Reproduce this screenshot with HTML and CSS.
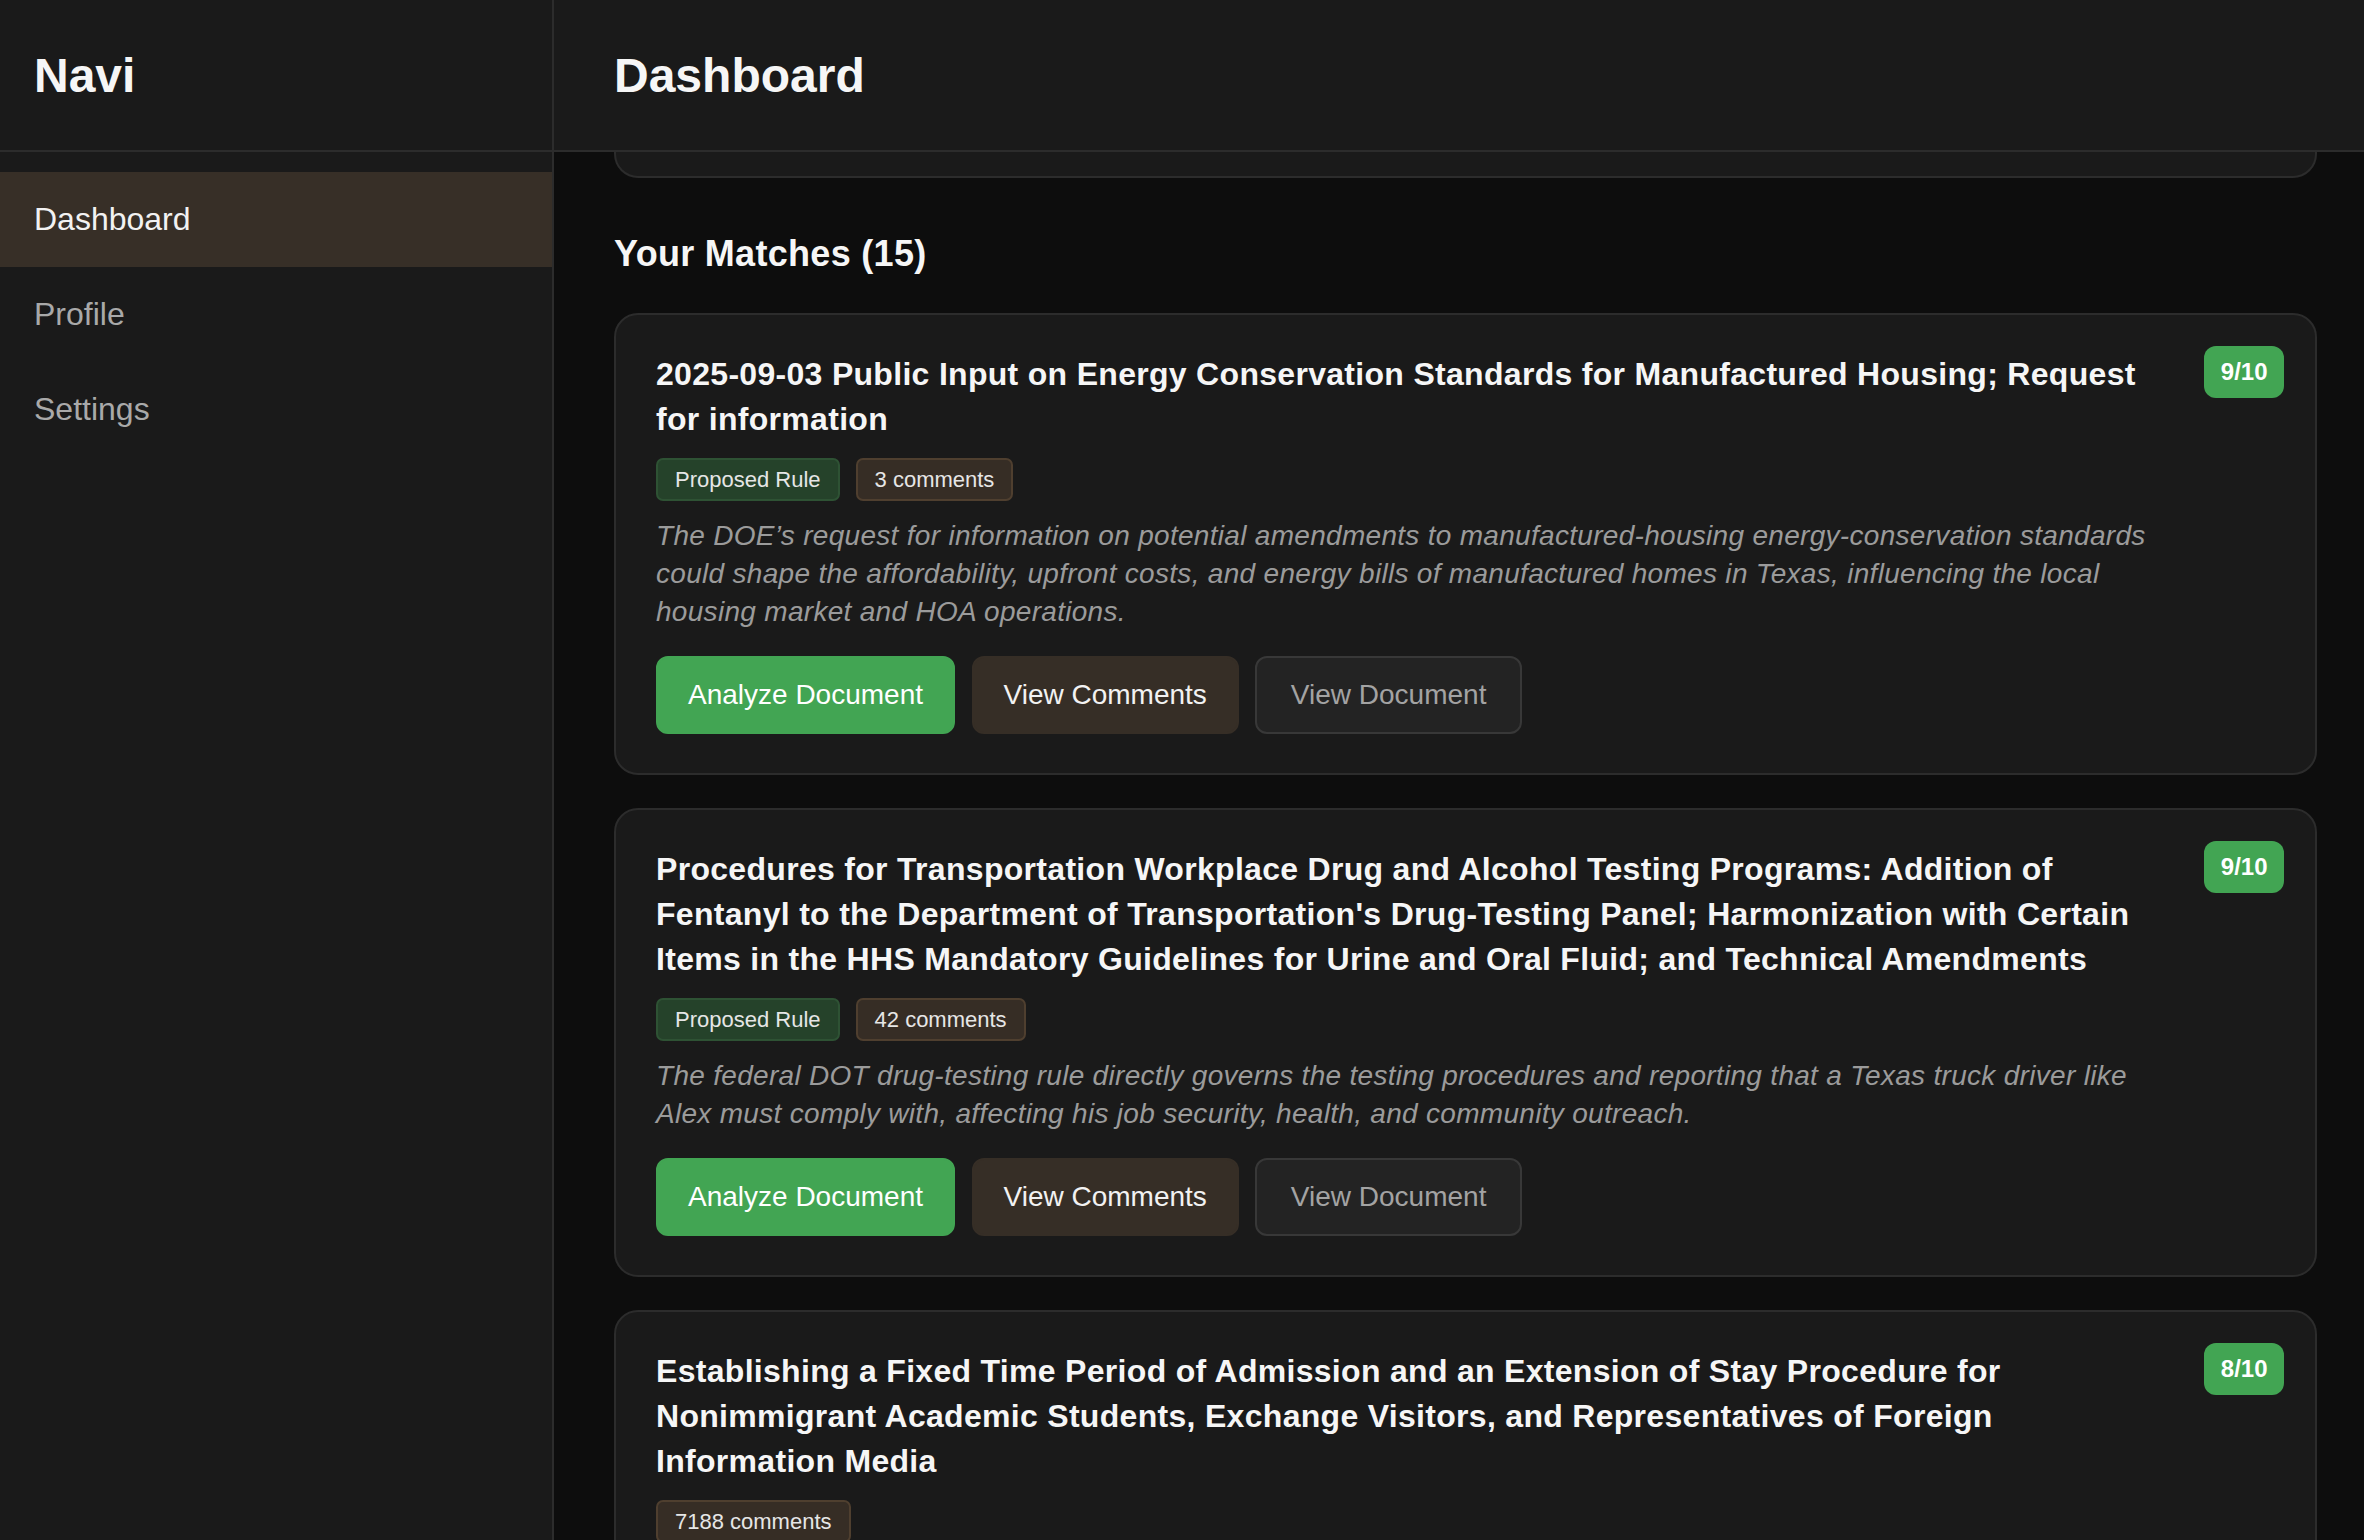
FILE: index.html
```html
<!DOCTYPE html>
<html lang="en">
<head>
<meta charset="utf-8">
<title>Navi – Dashboard</title>
<link rel="stylesheet" href="styles.css">
</head>
<body>
  <aside class="sidebar">
    <div class="brand">Navi</div>
    <nav class="nav">
      <a class="nav-item is-active">Dashboard</a>
      <a class="nav-item">Profile</a>
      <a class="nav-item">Settings</a>
    </nav>
  </aside>
  <main class="main">
    <header class="topbar"><h1 class="page-title">Dashboard</h1></header>
    <section class="content">
      <div class="card card-tail"></div>
      <h2 class="section-title">Your Matches (15)</h2>

      <article class="card">
        <div class="card-body">
          <h3 class="card-title">2025-09-03 Public Input on Energy Conservation Standards for Manufactured Housing; Request for information</h3>
          <div class="tags">
            <span class="tag tag-green">Proposed Rule</span>
            <span class="tag tag-brown">3 comments</span>
          </div>
          <p class="card-desc">The DOE’s request for information on potential amendments to manufactured-housing energy-conservation standards could shape the affordability, upfront costs, and energy bills of manufactured homes in Texas, influencing the local housing market and HOA operations.</p>
          <div class="actions">
            <button class="btn btn-primary">Analyze Document</button>
            <button class="btn btn-brown">View Comments</button>
            <button class="btn btn-ghost">View Document</button>
          </div>
        </div>
        <span class="score">9/10</span>
      </article>

      <article class="card">
        <div class="card-body">
          <h3 class="card-title">Procedures for Transportation Workplace Drug and Alcohol Testing Programs: Addition of Fentanyl to the Department of Transportation's Drug-Testing Panel; Harmonization with Certain Items in the HHS Mandatory Guidelines for Urine and Oral Fluid; and Technical Amendments</h3>
          <div class="tags">
            <span class="tag tag-green">Proposed Rule</span>
            <span class="tag tag-brown">42 comments</span>
          </div>
          <p class="card-desc">The federal DOT drug-testing rule directly governs the testing procedures and reporting that a Texas truck driver like Alex must comply with, affecting his job security, health, and community outreach.</p>
          <div class="actions">
            <button class="btn btn-primary">Analyze Document</button>
            <button class="btn btn-brown">View Comments</button>
            <button class="btn btn-ghost">View Document</button>
          </div>
        </div>
        <span class="score">9/10</span>
      </article>

      <article class="card">
        <div class="card-body">
          <h3 class="card-title">Establishing a Fixed Time Period of Admission and an Extension of Stay Procedure for Nonimmigrant Academic Students, Exchange Visitors, and Representatives of Foreign Information Media</h3>
          <div class="tags">
            <span class="tag tag-brown">7188 comments</span>
          </div>
        </div>
        <span class="score">8/10</span>
      </article>
    </section>
  </main>
</body>
</html>
```

FILE: styles.css
```css
* { box-sizing: border-box; }

html, body {
  margin: 0;
  height: 100%;
}

body {
  display: flex;
  overflow: hidden;
  background: #0d0d0d;
  color: #f4f4f4;
  font-family: "Liberation Sans", Arial, Helvetica, sans-serif;
}

/* Sidebar */
.sidebar {
  flex: 0 0 554px;
  width: 554px;
  background: #1a1a1a;
  border-right: 2px solid #2c2c2c;
  display: flex;
  flex-direction: column;
}

.brand {
  height: 152px;
  border-bottom: 2px solid #2c2c2c;
  display: flex;
  align-items: center;
  padding: 0 34px;
  font-size: 48px;
  font-weight: 700;
  color: #f6f6f6;
}

.nav {
  display: flex;
  flex-direction: column;
  padding-top: 20px;
}

.nav-item {
  height: 95px;
  display: flex;
  align-items: center;
  padding: 0 34px;
  font-size: 32px;
  color: #a9a9a9;
}

.nav-item.is-active {
  background: #372f27;
  color: #f2f2f2;
}

/* Main */
.main {
  flex: 1;
  min-width: 0;
  display: flex;
  flex-direction: column;
}

.topbar {
  height: 152px;
  flex: 0 0 152px;
  background: #1a1a1a;
  border-bottom: 2px solid #2c2c2c;
  display: flex;
  align-items: center;
  padding: 0 60px;
}

.page-title {
  margin: 0;
  font-size: 48px;
  font-weight: 700;
  color: #f6f6f6;
}

.content {
  flex: 1;
  overflow: hidden;
  padding: 0 47px 0 60px;
}

.section-title {
  margin: 54px 0 38px;
  font-size: 36px;
  line-height: 43px;
  letter-spacing: 0.3px;
  font-weight: 700;
  color: #f6f6f6;
}

/* Cards */
.card {
  display: flex;
  align-items: flex-start;
  background: #1a1a1a;
  border: 2px solid #2c2c2c;
  border-radius: 24px;
  padding: 37px 31px 39px 40px;
  margin-bottom: 33px;
}

.card-tail {
  height: 26px;
  padding: 0;
  margin: 0;
  border-top: 0;
  border-radius: 0 0 24px 24px;
}

.card-body {
  flex: 1;
  min-width: 0;
}

.card-title {
  margin: 0;
  font-size: 32px;
  line-height: 45px;
  letter-spacing: 0.3px;
  font-weight: 700;
  color: #f6f6f6;
}

.score {
  flex: none;
  margin: -6px 0 0 34px;
  height: 52px;
  line-height: 52px;
  padding: 0 16.5px;
  border-radius: 12px;
  background: #42a553;
  color: #ffffff;
  font-size: 24px;
  font-weight: 700;
}

.tags {
  display: flex;
  gap: 16px;
  margin-top: 16px;
}

.tag {
  height: 43px;
  line-height: 39px;
  padding: 0 17px;
  border: 2px solid;
  border-radius: 7px;
  font-size: 22px;
  color: #e6e6e6;
}

.tag-green {
  background: #25422a;
  border-color: #2e5234;
}

.tag-brown {
  background: #362d25;
  border-color: #4f3f2f;
}

.card-desc {
  margin: 16px 0 0;
  font-size: 28px;
  line-height: 38px;
  letter-spacing: 0.3px;
  font-style: italic;
  color: #9b9b9b;
}

.actions {
  display: flex;
  gap: 16.5px;
  margin-top: 25px;
}

.btn {
  height: 78px;
  padding: 0 30px;
  border: 2px solid transparent;
  border-radius: 12px;
  font-family: inherit;
  font-size: 28px;
  line-height: 74px;
  cursor: pointer;
}

.btn-primary {
  background: #42a553;
  border-color: #42a553;
  color: #ffffff;
}

.btn-brown {
  background: #362e26;
  border-color: #362e26;
  color: #f2f2f2;
}

.btn-ghost {
  background: #232323;
  border-color: #383838;
  color: #a3a3a3;
  padding: 0 33.5px;
}
```
